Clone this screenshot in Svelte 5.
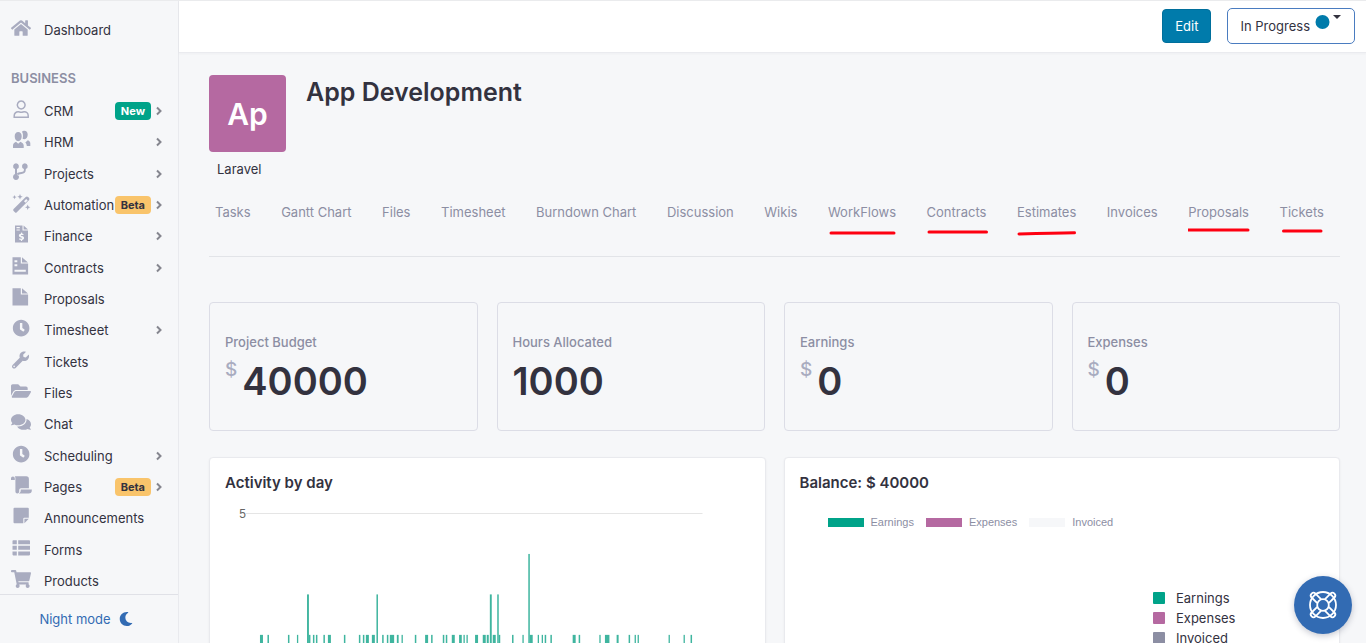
<script>
  const icons = {
    home: { box: '0 0 576 512', d: 'M280.37 148.26L96 300.11V464a16 16 0 0 0 16 16l112.06-.29a16 16 0 0 0 15.92-16V368a16 16 0 0 1 16-16h64a16 16 0 0 1 16 16v95.64a16 16 0 0 0 16 16.05L464 480a16 16 0 0 0 16-16V300L295.67 148.26a12.19 12.19 0 0 0-15.3 0zM571.6 251.47L488 182.56V44.05a12 12 0 0 0-12-12h-56a12 12 0 0 0-12 12v72.61L318.47 43a48 48 0 0 0-61 0L4.34 251.47a12 12 0 0 0-1.6 16.9l25.5 31A12 12 0 0 0 45.15 301l235.22-193.74a12.19 12.19 0 0 1 15.3 0L530.9 301a12 12 0 0 0 16.9-1.6l25.5-31a12 12 0 0 0-1.7-16.93z' },
    user: { box: '0 0 20 20', line: true, d: 'M10.200 2.100a3.900 3.900 0 1 0 .01 0zM3.200 18.200v-1.500a4 4 0 0 1 4-4c1.200 0 1.500.6 3 .6s1.800-.6 3-.6a4 4 0 0 1 4 4v1.500z' },
    users: { box: '0 0 20 20', d: 'M7.200 1.900c2.200 0 3.500 1.700 3.500 4.400 0 2.600-1.300 5-3.500 5s-3.500-2.400-3.500-5c0-2.700 1.300-4.400 3.500-4.400zM2 18v-2.500c0-2 1.200-3 3-3.800l2.200 2 2.200-2c1.800.8 3.300 1.800 3.300 3.800V18zM11 1.700c.7-.8 1.400-1 2.300-1 2.100 0 3.400 1.500 3.400 3.800 0 2.400-1.200 4.500-3.200 4.700-.7.1-1.500-.2-1.900-.5.6-2.400.6-5-.6-7zM14.300 12.400l2.500-2.200c1.600.6 2.500 1.600 2.500 3v2.700h-3.500c-.1-1.500-.5-2.600-1.500-3.500z' },
    branch: { box: '0 0 20 20', d: 'M5 1.300a3 3 0 0 1 1 5.800v5a3 3 0 1 1-2 0v-5a3 3 0 0 1 1-5.800zM13.800 1.300a3 3 0 0 1 1 5.800v.7c0 2.700-1.500 3.900-4.300 4.100-1.900.2-3 .5-3.700 1.600L6 11.300c1-.8 2.300-1 4.300-1.200 1.800-.2 2.600-.8 2.600-2.300v-.7a3 3 0 0 1 .9-5.800z' },
    wand: { box: '0 0 20 20', d: 'M2.600 16.100 14.700 4a1.700 1.700 0 0 1 2.400 0l.8.800a1.700 1.700 0 0 1 0 2.400L5.800 19.300a1.300 1.300 0 0 1-1.900 0l-1.300-1.300a1.300 1.300 0 0 1 0-1.900zM13 8.200l1.500 1.500 2.200-2.200L15.200 6zM9 1l.8 1.900 1.900.8-1.900.8L9 6.400l-.8-1.900-1.900-.8 1.900-.8zM3.500 2l.6 1.500 1.500.6-1.500.6-.6 1.500-.6-1.500-1.500-.6 1.500-.6zM16.700 11.500l.8 1.900 1.900.8-1.900.8-.8 1.900-.8-1.900-1.900-.8 1.900-.8z' },
    bill: { box: '0 0 20 20', d: 'M4 1.400h7.500v5H17v12.200H4zM5.500 3v1.200h3.300V3zm0 2.400v1.200h3.300V5.400zM12.600 1.400 17 5.400h-4.400zM9.900 8.700v1c-1.300.1-2 .8-2 1.800 0 1.100.8 1.600 2 1.900.9.300 1.100.5 1.100.8s-.3.500-.9.500-1.100-.2-1.500-.5l-.7 1.100c.5.400 1.200.7 2 .7v1.100h1.200v-1.100c1.200-.1 2-.8 2-1.900s-.8-1.600-2.100-2c-.8-.200-1-.400-1-.700s.2-.5.700-.5c.600 0 1 .1 1.400.4l.6-1.100c-.4-.3-1-.5-1.600-.6v-1z' },
    contract: { box: '0 0 20 20', d: 'M1.500 1.300h8.300v6.200h7.300v11H1.500zM3.500 4.300v2h2.800v-2zm0 4v2h2.800v-2zm0 5.500v2h11.300v-2zM11 1.300l6 5.300h-6z' },
    file: { box: '0 0 20 20', d: 'M1.500 1.300h8.300v6.200h7.300v11H1.500zM11 1.300l6 5.300h-6z' },
    clock: { box: '-48 -48 600 600', d: 'M256 8C119 8 8 119 8 256s111 248 248 248 248-111 248-248S393 8 256 8zm57.100 350.100L224.900 294c-3.100-2.300-4.900-5.900-4.900-9.700V116c0-6.600 5.400-12 12-12h48c6.600 0 12 5.400 12 12v137.700l63.500 46.200c5.400 3.900 6.500 11.400 2.600 16.800l-28.200 38.800c-3.900 5.300-11.400 6.500-16.800 2.600z' },
    wrench: { box: '-30 -44 600 600', d: 'M507.73 109.1c-2.24-9.03-13.54-12.09-20.12-5.51l-74.36 74.36-67.88-11.31-11.31-67.88 74.36-74.36c6.62-6.62 3.43-17.9-5.66-20.16-47.38-11.74-99.55.91-136.58 37.93-39.64 39.64-50.55 97.1-34.05 147.2L18.74 402.76c-24.99 24.99-24.99 65.51 0 90.5 24.99 24.99 65.51 24.99 90.5 0l213.21-213.21c50.12 16.71 107.47 5.68 147.37-34.22 37.07-37.07 49.7-89.32 37.91-136.73zM64 472c-13.25 0-24-10.75-24-24 0-13.26 10.75-24 24-24s24 10.74 24 24c0 13.25-10.75 24-24 24z' },
    folder: { box: '0 0 576 512', d: 'M572.694 292.093L500.27 416.248A63.997 63.997 0 0 1 444.989 448H45.025c-18.523 0-30.064-20.093-20.731-36.093l72.424-124.155A64 64 0 0 1 152 256h399.964c18.523 0 30.064 20.093 20.73 36.093zM152 224h328v-48c0-26.51-21.49-48-48-48H272l-64-64H48C21.49 64 0 85.49 0 112v278.046l69.077-118.418C86.214 242.25 117.989 224 152 224z' },
    chat: { box: '0 0 576 512', d: 'M416 192c0-88.4-93.1-160-208-160S0 103.6 0 192c0 34.3 14.1 65.9 38 92-13.4 30.2-35.5 54.2-35.8 54.5-2.2 2.3-2.8 5.7-1.5 8.7S4.8 352 8 352c36.6 0 66.9-12.3 88.7-25 32.2 15.7 70.3 25 111.3 25 114.9 0 208-71.6 208-160zm122 220c23.9-26 38-57.7 38-92 0-66.9-53.5-124.2-129.3-148.1.9 6.6 1.3 13.3 1.3 20.1 0 105.9-107.7 192-240 192-10.8 0-21.3-.8-31.7-1.9C207.8 439.6 281.8 480 368 480c41 0 79.1-9.2 111.3-25 21.8 12.7 52.1 25 88.7 25 3.2 0 6.1-1.9 7.3-4.8 1.3-2.9.7-6.3-1.5-8.7-.3-.3-22.4-24.2-35.8-54.5z' },
    scroll: { box: '0 0 20 20', d: 'M0 5V3.300a1.900 1.900 0 0 1 3.800 0V5zM3.800 1.300h11.500a2.600 2.600 0 0 1 2.600 2.600v9.400H10a1.800 1.800 0 0 0-1.800 1.800v1.500a1.900 1.900 0 0 1-3.800 0V3.300a3 3 0 0 0-.6-2zM9.700 14.500h11.100v.7a3.200 3.200 0 0 1-3.200 3.200H7.900c1.200-.6 1.800-1.400 1.800-2.600z' },
    note: { box: '0 0 20 20', d: 'M3.500 1.800h13.300a1 1 0 0 1 1 1v8.900h-4.500a1 1 0 0 0-1 1v4.500H3.500a1 1 0 0 1-1-1V2.800a1 1 0 0 1 1-1zM13.400 12.800h4.400l-4.400 4.400z' },
    list: { box: '0 0 20 20', d: 'M2.300 2.200h3.500v4H1.500V3a.8.8 0 0 1 .8-.8zM7.200 2.200h11a.8.8 0 0 1 .8.8v3.200H7.200zM1.500 7.800h4.300v4H1.500zM7.200 7.800H19v4H7.200zM1.500 13.400h4.300v4H2.300a.8.8 0 0 1-.8-.8zM7.200 13.400H19v3.200a.8.8 0 0 1-.8.8h-11z' },
    cart: { box: '0 0 576 512', d: 'M528.12 301.319l47.273-208C578.806 78.301 567.391 64 551.99 64H159.208l-9.166-44.81C147.758 8.021 137.93 0 126.529 0H24C10.745 0 0 10.745 0 24v16c0 13.255 10.745 24 24 24h69.883l70.248 343.435C147.325 417.1 136 435.222 136 456c0 30.928 25.072 56 56 56s56-25.072 56-56c0-15.674-6.447-29.835-16.824-40h209.647C430.447 426.165 424 440.326 424 456c0 30.928 25.072 56 56 56s56-25.072 56-56c0-22.172-12.888-41.332-31.579-50.405l5.517-24.276c3.413-15.018-8.002-29.319-23.403-29.319H218.117l-6.545-32h293.145c11.206 0 20.92-7.754 23.403-18.681z' }
  };

  const menu = [
    { label: 'CRM', icon: 'user', badge: 'New', more: true },
    { label: 'HRM', icon: 'users', more: true },
    { label: 'Projects', icon: 'branch', more: true },
    { label: 'Automation', icon: 'wand', badge: 'Beta', more: true },
    { label: 'Finance', icon: 'bill', more: true },
    { label: 'Contracts', icon: 'contract', more: true },
    { label: 'Proposals', icon: 'file' },
    { label: 'Timesheet', icon: 'clock', more: true },
    { label: 'Tickets', icon: 'wrench' },
    { label: 'Files', icon: 'folder' },
    { label: 'Chat', icon: 'chat' },
    { label: 'Scheduling', icon: 'clock', more: true },
    { label: 'Pages', icon: 'scroll', badge: 'Beta', more: true },
    { label: 'Announcements', icon: 'note' },
    { label: 'Forms', icon: 'list' },
    { label: 'Products', icon: 'cart' }
  ];

  // mark: hand-drawn underline, drawn from the tab's lower left corner
  const tabs = [
    { label: 'Tasks' },
    { label: 'Gantt Chart' },
    { label: 'Files' },
    { label: 'Timesheet' },
    { label: 'Burndown Chart' },
    { label: 'Discussion' },
    { label: 'Wikis' },
    { label: 'WorkFlows', mark: 'M3 11H66' },
    { label: 'Contracts', mark: 'M2 10H59.500' },
    { label: 'Estimates', mark: 'M2 12C20 11.500 38 11 57.500 10.800' },
    { label: 'Invoices' },
    { label: 'Proposals', mark: 'M0 8H60' },
    { label: 'Tickets', mark: 'M3.500 9H41' }
  ];

  const stats = [
    { label: 'Project Budget', value: '40000', money: true },
    { label: 'Hours Allocated', value: '1000' },
    { label: 'Earnings', value: '0', money: true },
    { label: 'Expenses', value: '0', money: true }
  ];

  // [x, width, value]
  const bars = [
    [35, 3, 1], [42.500, 1.500, 1], [63, 1.500, 1], [72, 1.300, 1], [82.100, 1.900, 2], [84, 1.500, 1], [88, 1.500, 1], [91, 1.500, 1],
    [98.500, 1.500, 1], [103, 3, 1], [119, 1.500, 1], [134, 1.500, 1], [138, 1.500, 1], [141, 3, 1], [147, 3, 1], [151.600, 1.500, 2],
    [157.300, 1.500, 1], [162, 1.500, 1], [165, 4.300, 1], [172, 1.800, 1], [176.700, 1.300, 1], [190, 1.500, 1], [200.300, 3, 1],
    [206.300, 1.500, 1], [218, 1.500, 1], [221, 1.500, 1], [227, 3, 1], [234.300, 2.700, 1], [238.700, 1.300, 1], [241.700, 1.300, 1],
    [250.300, 3, 1], [258, 3, 1], [262, 2, 1], [265.100, 1.900, 2], [268, 3, 1], [272.500, 1.500, 2], [274, 1.500, 1], [287.300, 1.500, 1],
    [297.700, 1.300, 1], [303.600, 1.500, 3], [305, 3, 1], [313, 1.300, 1], [317, 1.300, 1], [320, 1.500, 1], [325.700, 1.500, 1],
    [348, 3, 1], [354, 1.500, 1], [374.700, 1.300, 1], [380.300, 4.500, 1], [392, 2, 1], [404, 1.500, 1], [410, 1.300, 1],
    [413, 1.300, 1], [444, 1.300, 1], [459, 1.300, 1], [466, 1.500, 1]
  ].map(([x, w, v]) => ({ x, w, top: 175.500 - v * 40.500 }));
</script>

{#snippet glyph(name)}
  <svg class="icon" class:outline={icons[name].line} viewBox={icons[name].box} aria-hidden="true"><path d={icons[name].d} fill-rule="evenodd" /></svg>
{/snippet}

<div class="app">
  <aside>
    <a class="row dashboard" href="#dashboard">{@render glyph('home')}<span class="label">Dashboard</span></a>
    <h2>Business</h2>
    <nav>
      {#each menu as item}
        <a class="row" href={'#' + item.label.toLowerCase()}>
          {@render glyph(item.icon)}
          <span class="label">{item.label}</span>
          {#if item.badge}<span class="badge" class:beta={item.badge === 'Beta'}>{item.badge}</span>{/if}
          {#if item.more}<svg class="chevron" viewBox="0 0 8 10" aria-hidden="true"><path d="M2 1.500 5.500 5 2 8.500" /></svg>{/if}
        </a>
      {/each}
    </nav>
    <button class="night">Night mode
      <svg viewBox="0 0 512 512" aria-hidden="true"><path d="M283.211 512c78.962 0 151.079-35.925 198.857-94.792 7.068-8.708-.639-21.43-11.562-19.35-124.203 23.654-238.262-71.576-238.262-196.954 0-72.222 38.662-138.635 101.498-174.394 9.686-5.512 7.25-20.197-3.756-22.23A258.156 258.156 0 0 0 283.211 0c-141.309 0-256 114.511-256 256 0 141.309 114.511 256 256 256z" /></svg>
    </button>
  </aside>

  <div class="page">
    <header>
      <button class="edit">Edit</button>
      <button class="status">In Progress
        <svg viewBox="0 0 27 16" aria-hidden="true"><circle cx="7.500" cy="8" r="7" /><path d="M18 1h8l-4 4z" /></svg>
      </button>
    </header>

    <main>
      <section class="project">
        <div class="avatar">Ap</div>
        <h1>App Development</h1>
      </section>
      <p class="tag">Laravel</p>

      <nav class="tabs">
        {#each tabs as tab}
          <a href={'#tab-' + tab.label.toLowerCase().replace(' ', '-')}>{tab.label}{#if tab.mark}<svg class="mark" viewBox="0 0 70 16" aria-hidden="true"><path d={tab.mark} /></svg>{/if}</a>
        {/each}
      </nav>

      <section class="stats">
        {#each stats as stat}
          <article class="stat">
            <h3>{stat.label}</h3>
            <p>{#if stat.money}<span class="currency">$</span>{/if}<strong>{stat.value}</strong></p>
          </article>
        {/each}
      </section>

      <section class="charts">
        <article class="card">
          <h2>Activity by day</h2>
          <svg class="activity" viewBox="0 0 525 240" role="img" aria-label="Activity by day">
            <path class="grid" d="M21 13.500H478" />
            <text x="21" y="18" text-anchor="end">5</text>
            {#each bars as bar}<rect x={bar.x} y={bar.top} width={bar.w} height={216 - bar.top} />{/each}
          </svg>
        </article>
        <article class="card">
          <h2>Balance: $ 40000</h2>
          <ul class="keys">
            <li><i class="green"></i>Earnings</li>
            <li><i class="purple"></i>Expenses</li>
            <li><i class="pale"></i>Invoiced</li>
          </ul>
          <ul class="totals">
            <li><i class="green"></i>Earnings</li>
            <li><i class="purple"></i>Expenses</li>
            <li><i class="grey"></i>Invoiced</li>
          </ul>
        </article>
      </section>
    </main>
  </div>

  <button class="help" aria-label="Help">
    <svg viewBox="0 0 30 30" aria-hidden="true">
      <circle cx="15" cy="15" r="13" />
      <circle cx="15" cy="15" r="5.800" />
      <path d="M9.300 13.200 3.600 7.500a2.700 2.700 0 0 1 3.900-3.900l5.700 5.700M16.800 9.300l5.700-5.700a2.700 2.700 0 0 1 3.900 3.900l-5.700 5.700M20.700 16.800l5.700 5.700a2.700 2.700 0 0 1-3.900 3.900l-5.700-5.700M13.200 20.700l-5.700 5.700a2.700 2.700 0 0 1-3.900-3.900l5.700-5.700" />
    </svg>
  </button>
</div>

<style>
  :global(body) { background: #f6f7f9; }
  .app {
    display: flex;
    height: 100vh;
    overflow: hidden;
    position: relative;
    box-sizing: border-box;
    border-top: 1px solid #eaebed;
    background: #f6f7f9;
    color: #33323f;
    font: 13px/20px Inter, sans-serif;
  }
  .app :global(*) { box-sizing: border-box; }
  h1, h2, h3, p, ul { margin: 0; padding: 0; list-style: none; }
  a { color: inherit; text-decoration: none; }
  button { font: inherit; cursor: pointer; }

  aside {
    display: flex;
    flex-direction: column;
    flex: 0 0 179px;
    min-width: 0;
    border-right: 1px solid #e9eaee;
  }
  .row {
    display: flex;
    align-items: center;
    height: 26px;
    padding: 0 15px 0 11px;
  }
  .dashboard { margin-top: 16px; }
  .icon { width: 20px; height: 20px; flex: none; margin: 0 13px 4px 0; fill: #a9acc0; overflow: visible; }
  .outline { fill: none; stroke: #a9acc0; stroke-width: 1.500; }
  .label { flex: 1; min-width: 0; white-space: nowrap; }
  .badge {
    padding: 0 6px;
    border-radius: 4px;
    background: #00a389;
    color: #fff;
    font-size: 11px;
    font-weight: 700;
    line-height: 18px;
  }
  .beta { background: #f9c46b; color: #33323f; }
  .chevron { width: 8px; height: 10px; flex: none; margin-left: 4px; fill: none; stroke: #85868f; stroke-width: 2; }
  aside h2 {
    padding: 25px 11px 10px;
    color: #8c8ea3;
    font-size: 13px;
    line-height: 20px;
    font-weight: 600;
    text-transform: uppercase;
  }
  aside nav {
    flex: 1;
    display: flex;
    flex-direction: column;
    justify-content: space-between;
  }
  .night {
    display: flex;
    align-items: center;
    justify-content: center;
    gap: 8px;
    padding: 14px 12px 14px 6px;
    border: 0;
    border-top: 1px solid #e0e1e7;
    background: none;
    color: #326bb3;
  }
  .night svg { width: 14px; height: 14px; fill: #326bb3; }

  .page { flex: 1; min-width: 0; }
  header {
    display: flex;
    justify-content: flex-end;
    align-items: center;
    gap: 16px;
    height: 52px;
    padding: 0 11px 2px;
    background: #fff;
    border-bottom: 1px solid #eaebef;
    box-shadow: 0 1px 2px rgba(50, 50, 70, .04);
  }
  .edit {
    height: 34px;
    padding: 0 12px;
    border: 1px solid #006f9c;
    border-radius: 4px;
    background: #007bab;
    color: #fff;
  }
  .status {
    display: flex;
    align-items: center;
    gap: 5px;
    height: 36px;
    padding: 0 12px;
    border: 1px solid #4a7cc0;
    border-radius: 5px;
    background: #fff;
    color: #33323f;
  }
  .status svg { width: 27px; height: 16px; margin-bottom: 7px; fill: #33323f; }
  .status circle { fill: #007bab; }

  main { padding: 22px 26px 0 30px; }
  .project { display: flex; gap: 20px; }
  .avatar {
    display: grid;
    place-items: center;
    width: 77px;
    height: 77px;
    border-radius: 4px;
    background: #b569a1;
    color: #fff;
    font-size: 30px;
    font-weight: 600;
  }
  h1 { font-size: 25px; line-height: 34px; font-weight: 600; }
  .tag { padding: 7px 8px 0; }
  .tabs {
    display: flex;
    justify-content: space-between;
    margin-top: 23px;
    padding: 0 16px 34px 6px;
    border-bottom: 1px solid #e2e4e8;
    color: #8c8ea3;
    white-space: nowrap;
  }
  .tabs a { position: relative; }
  .mark {
    position: absolute;
    top: 100%;
    left: 0;
    width: 70px;
    height: 16px;
    fill: none;
    stroke: #fe0011;
    stroke-width: 3;
    stroke-linecap: round;
  }
  .stats {
    display: grid;
    grid-template-columns: repeat(4, 1fr);
    gap: 19px;
    margin-top: 45px;
  }
  .stat { padding: 29px 15px 25px; border: 1px solid #dcdde6; border-radius: 4px; }
  h3 { color: #8c8ea3; font-size: 13px; line-height: 20px; font-weight: 500; }
  .stat p { display: flex; gap: 5px; margin-top: 5px; }
  .currency { color: #a9acc0; font-size: 19px; line-height: 26px; font-weight: 500; }
  strong { font-size: 38px; line-height: 48px; font-weight: 600; }
  .charts {
    display: grid;
    grid-template-columns: 1fr 1fr;
    gap: 18px;
    margin-top: 26px;
  }
  .card {
    padding: 15px;
    border: 1px solid #e9eaee;
    border-radius: 4px;
    background: #fff;
    box-shadow: 0 1px 2px rgba(50, 50, 70, .08);
  }
  .card h2 { font-size: 15px; line-height: 20px; font-weight: 600; }
  .activity { display: block; width: 100%; margin-top: 7px; fill: #3fb59f; }
  .activity text { fill: #666; font: 12px "Liberation Sans", sans-serif; }
  .grid { stroke: #e5e5e5; }
  .keys {
    display: flex;
    gap: 12px;
    margin-top: 19px;
    padding-left: 28px;
    color: #8c8ea3;
    font: 11px/20px "Liberation Sans", sans-serif;
  }
  .keys li { display: flex; align-items: center; gap: 7px; }
  .keys i { width: 36px; height: 9px; }
  .totals { width: 160px; margin: 56px 11px 0 auto; }
  .totals li { display: flex; align-items: center; gap: 11px; }
  .totals i { width: 12px; height: 12px; border-radius: 1px; }
  .green { background: #00a389; }
  .purple { background: #b569a1; }
  .pale { background: #f6f7f9; }
  .grey { background: #8c8ea3; }

  .help {
    position: absolute;
    right: 14px;
    bottom: 9px;
    display: grid;
    place-items: center;
    width: 58px;
    height: 58px;
    padding: 0;
    border: 0;
    border-radius: 50%;
    background: #326bb3;
    box-shadow: 0 2px 6px rgba(30, 40, 70, .25);
  }
  .help svg { width: 30px; height: 30px; fill: none; stroke: #fff; stroke-width: 1.800; }
</style>
